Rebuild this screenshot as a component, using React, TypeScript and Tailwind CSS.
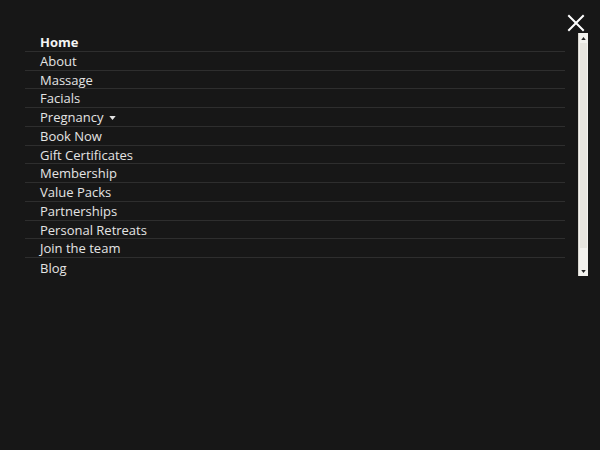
import React from 'react';

const items = [
  'Home',
  'About',
  'Massage',
  'Facials',
  'Pregnancy',
  'Book Now',
  'Gift Certificates',
  'Membership',
  'Value Packs',
  'Partnerships',
  'Personal Retreats',
  'Join the team',
  'Blog',
];

const App: React.FC = () => {
  return (
    <div
      className="w-[600px] h-[450px] bg-[#171717] relative overflow-hidden"
      style={{ fontFamily: '"Open Sans", sans-serif' }}
    >
      {/* Close button */}
      <button className="absolute left-[567px] top-[14px] w-[18px] h-[18px]">
        <svg viewBox="0 0 18 18" width="18" height="18">
          <path d="M2 2 L16 16 M16 2 L2 16" stroke="#ffffff" strokeWidth="2" strokeLinecap="square" />
        </svg>
      </button>

      <div className="flex pt-[33px] pl-[25px]">
        {/* Menu list */}
        <ul className="w-[540px]">
          {items.map((item, i) => (
            <li
              key={item}
              className={`h-[18.75px] flex items-center pl-[15px] pt-[2px] text-[13px] text-[#e4e4e4] ${
                i < items.length - 1 ? 'border-b border-[#2e2e2e]' : ''
              } ${i === 0 ? 'font-bold text-[#f4f4f4]' : ''}`}
            >
              <span>{item}</span>
              {item === 'Pregnancy' && (
                <svg viewBox="0 0 8 5" width="7" height="4" className="ml-[6px] mt-[1px]">
                  <path d="M0 0 L8 0 L4 5 Z" fill="#e4e4e4" />
                </svg>
              )}
            </li>
          ))}
        </ul>

        {/* Scrollbar */}
        <div className="ml-[13px] w-[10px] h-[243px] bg-[#f3f2ee] flex flex-col border-l border-[#d9d7d0]">
          <div className="h-[10px] flex items-center justify-center">
            <svg viewBox="0 0 6 4" width="5" height="3">
              <path d="M0 4 L6 4 L3 0 Z" fill="#222" />
            </svg>
          </div>
          <div className="flex-1 mx-[1px] bg-[#e7e5df] mb-[18px]" />
          <div className="h-[10px] flex items-center justify-center">
            <svg viewBox="0 0 6 4" width="5" height="3">
              <path d="M0 0 L6 0 L3 4 Z" fill="#222" />
            </svg>
          </div>
        </div>
      </div>
    </div>
  );
};

export default App;
